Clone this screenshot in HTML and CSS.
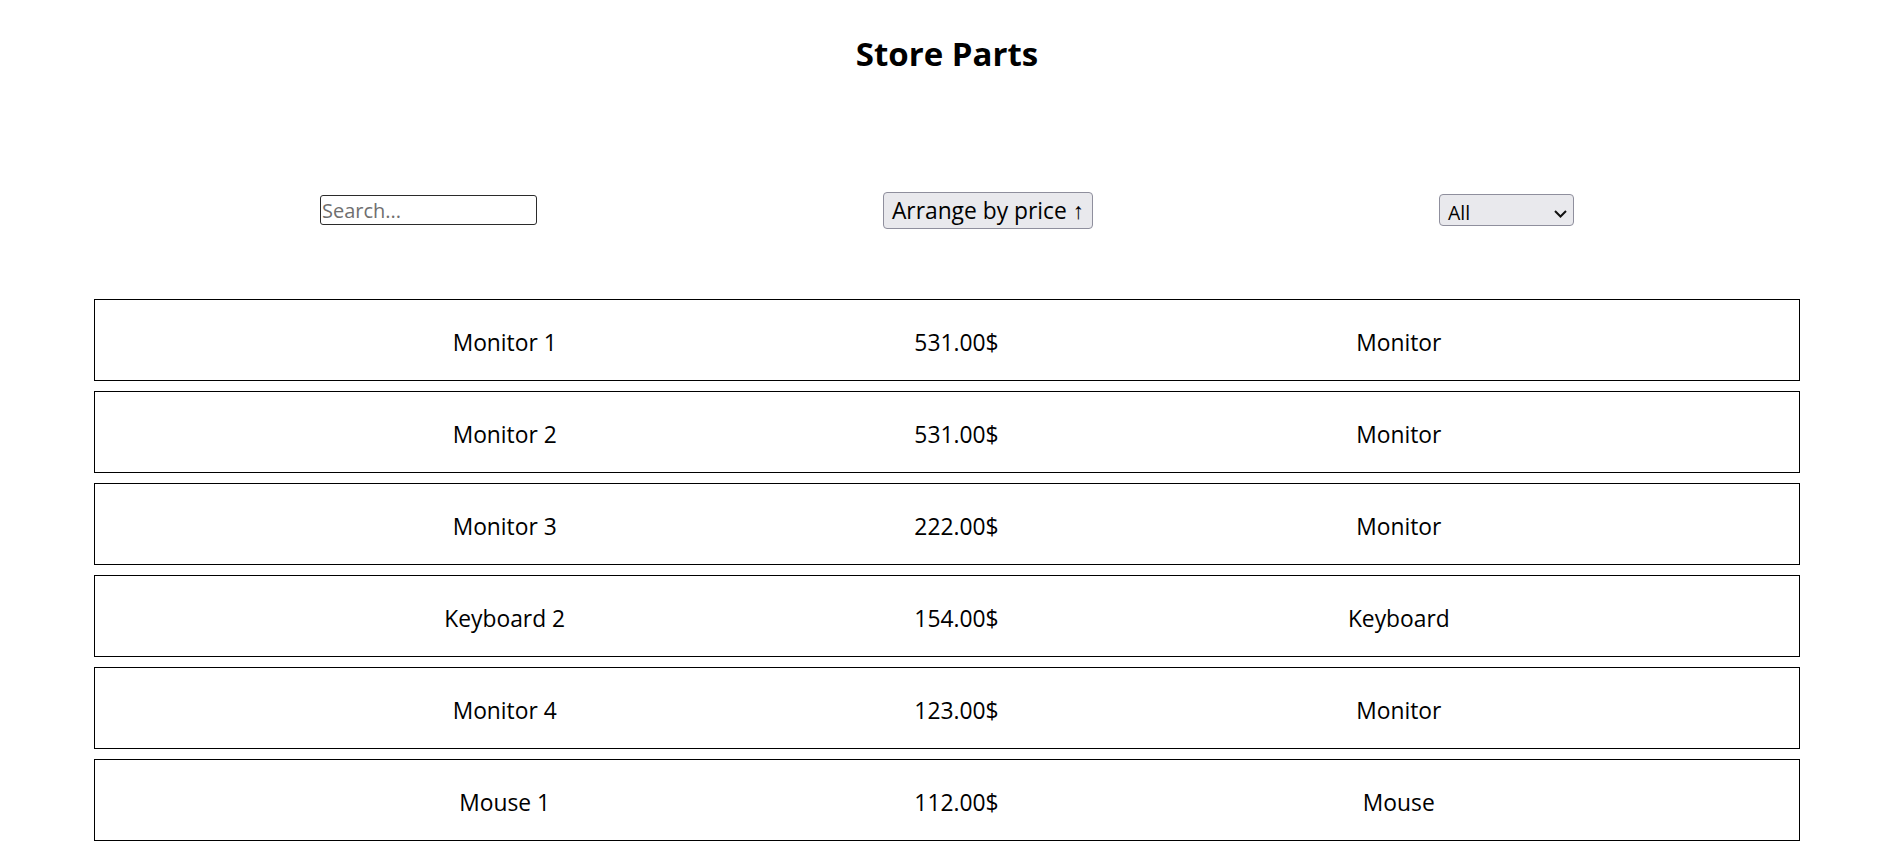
FILE: index.html
```html
<!DOCTYPE html>
<html>
<head>
<meta charset="utf-8">
<link rel="stylesheet" href="styles.css">
</head>
<body>
<h1 class="title">Store Parts</h1>
<div class="controls">
  <input class="search" type="text" placeholder="Search...">
  <button class="sort">Arrange by price ↑</button>
  <div class="select"><span>All</span><svg class="chev" width="13" height="8" viewBox="0 0 13 8"><path d="M1 1 L6.5 6.5 L12 1" fill="none" stroke="#111" stroke-width="2"/></svg></div>
</div>
<div class="list">
  <div class="row"><span>Monitor 1</span><span>531.00$</span><span>Monitor</span></div>
  <div class="row"><span>Monitor 2</span><span>531.00$</span><span>Monitor</span></div>
  <div class="row"><span>Monitor 3</span><span>222.00$</span><span>Monitor</span></div>
  <div class="row"><span>Keyboard 2</span><span>154.00$</span><span>Keyboard</span></div>
  <div class="row"><span>Monitor 4</span><span>123.00$</span><span>Monitor</span></div>
  <div class="row"><span>Mouse 1</span><span>112.00$</span><span>Mouse</span></div>
</div>
</body>
</html>
```
FILE: styles.css
```css
body { margin: 0; font-family: "Open Sans", sans-serif; color: #000; background: #fff; }
.title { margin: 31px 0 0; text-align: center; font-size: 33px; line-height: 45px; font-weight: 700; }
.controls { display: flex; justify-content: center; align-items: center; gap: 346px; height: 38px; margin-top: 115px; }
.search { width: 217px; height: 30px; box-sizing: border-box; border: 1px solid #2b2b2b; border-radius: 3px; font: 20px "Open Sans", sans-serif; padding: 0 1px; outline: none; }
.search::placeholder { color: #6f6f6f; }
.sort { box-sizing: border-box; width: 210px; height: 37px; background: #e9e9ed; border: 1px solid #8f8f9d; border-radius: 4px; font: 22.8px "Open Sans", sans-serif; color: #000; padding: 0; }
.select { box-sizing: border-box; width: 135px; height: 32px; background: #e9e9ed; border: 1px solid #8f8f9d; border-radius: 4px; font: 19.5px "Open Sans", sans-serif; display: flex; align-items: center; justify-content: space-between; padding: 4px 6px 0 8px; }
.chev { margin-top: 4px; }
.list { display: flex; flex-direction: column; gap: 10px; margin: 70px 94px 0; }
.row { display: flex; justify-content: space-evenly; align-items: center; height: 82px; box-sizing: border-box; border: 1px solid #000; padding-top: 4px; font-size: 22.8px; }
```
